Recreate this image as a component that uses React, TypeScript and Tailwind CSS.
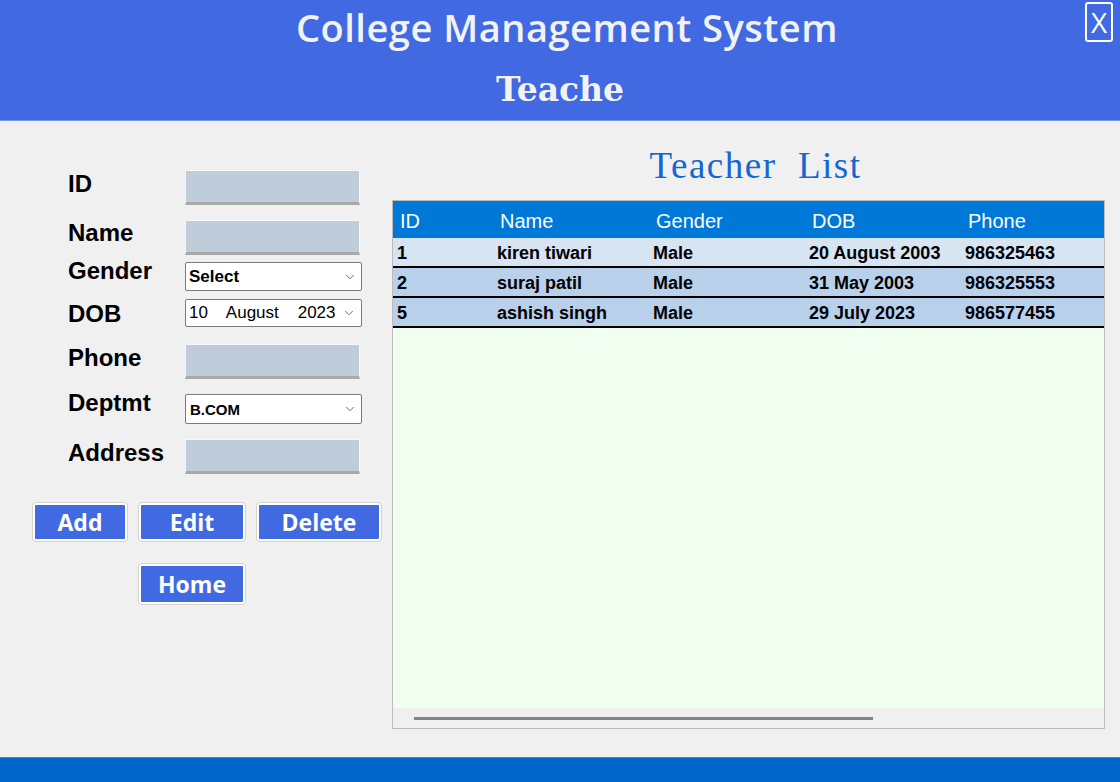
import { ChevronDown } from 'lucide-react'

const TEACHERS = [
  { id: '1', name: 'kiren tiwari', gender: 'Male', dob: '20 August 2003', phone: '986325463' },
  { id: '2', name: 'suraj patil', gender: 'Male', dob: '31 May 2003', phone: '986325553' },
  { id: '5', name: 'ashish singh', gender: 'Male', dob: '29 July 2023', phone: '986577455' },
]

const labelCls = "w-[117px] h-[28px] leading-[28px] text-[24px] font-bold text-black font-['Liberation_Sans',Arial,sans-serif]"
const inputCls = 'w-[175px] h-[35px] bg-[#bfcddb] border border-[#f7f7f7] border-b-[3px] border-b-[#a9a9a9] outline-none'
const selectCls = 'w-[177px] bg-white border border-[#7a7a7a] rounded-[2px] flex items-center pl-[3px] pr-[4px] text-black'
const btnCls = "h-[38px] bg-[#4169e1] border-2 border-white outline outline-1 outline-[#d4d4d4] rounded-[3px] text-white text-[23px] font-bold font-['Open_Sans',sans-serif] leading-none"

function TextField({ label, labelMt }: { label: string; labelMt: string }) {
  return (
    <div className="flex items-start">
      <div className={`${labelCls} ${labelMt}`}>{label}</div>
      <input className={inputCls} />
    </div>
  )
}

export default function App() {
  return (
    <div className="w-[1120px] h-[782px] flex flex-col bg-[#f0f0f0] overflow-hidden font-['Liberation_Sans',Arial,sans-serif]">
      <header className="relative h-[121px] bg-[#4169e1] border-b border-[#7493f0] flex flex-col items-center">
        <h1 className="mt-[2px] pl-[14px] text-[38px] leading-[50px] tracking-[0.5px] font-semibold text-[#f2f2f2] font-['Open_Sans',sans-serif]">
          College Management System
        </h1>
        <h2 className="mt-[18px] text-[33px] leading-[40px] font-bold text-[#f2f2f2] font-['DejaVu_Serif',serif]">
          Teache
        </h2>
        <button className="absolute right-[7px] top-[2px] w-[28px] h-[40px] border-2 border-white rounded-[3px] text-white text-[28px] leading-none font-['Open_Sans',sans-serif] flex items-center justify-center">
          X
        </button>
      </header>

      <main className="flex-1 flex">
        <div className="w-[392px] flex flex-col pt-[49px]">
          <div className="pl-[68px] flex flex-col">
            <TextField label="ID" labelMt="mt-[0px]" />
            <div className="mt-[15px]">
              <TextField label="Name" labelMt="-mt-[1px]" />
            </div>
            <div className="mt-[7px] flex items-start">
              <div className={`${labelCls} -mt-[5px]`}>Gender</div>
              <div className={`${selectCls} h-[29px]`}>
                <span className="flex-1 text-[17px] font-bold">Select</span>
                <ChevronDown size={14} strokeWidth={1.5} className="text-[#555]" />
              </div>
            </div>
            <div className="mt-[8px] flex items-start">
              <div className={`${labelCls} mt-[1px]`}>DOB</div>
              <div className={`${selectCls} h-[28px] overflow-hidden`}>
                <span className="w-[153px] text-[17px] whitespace-pre overflow-hidden">10    August    2023</span>
                <ChevronDown size={14} strokeWidth={1.5} className="text-[#555] shrink-0" />
              </div>
            </div>
            <div className="mt-[16px]">
              <TextField label="Phone" labelMt="mt-[0px]" />
            </div>
            <div className="mt-[15px] flex items-start">
              <div className={`${labelCls} -mt-[5px]`}>Deptmt</div>
              <div className={`${selectCls} h-[30px]`}>
                <span className="flex-1 text-[15px] font-bold pl-[1px] pt-[2px]">B.COM</span>
                <ChevronDown size={14} strokeWidth={1.5} className="text-[#555]" />
              </div>
            </div>
            <div className="mt-[15px]">
              <TextField label="Address" labelMt="mt-[0px]" />
            </div>
          </div>

          <div className="mt-[29px] pl-[33px] flex gap-[12px]">
            <button className={`${btnCls} w-[94px]`}>Add</button>
            <button className={`${btnCls} w-[106px]`}>Edit</button>
            <button className={`${btnCls} w-[124px]`}>Delete</button>
          </div>
          <div className="mt-[23px] pl-[139px]">
            <button className={`${btnCls} w-[106px] h-[40px]`}>Home</button>
          </div>
        </div>

        <div className="flex-1 flex flex-col pt-[23px] pb-[28px] pr-[15px]">
          <h3 className="h-[56px] pl-[14px] text-center text-[37px] leading-[44px] tracking-[1.5px] text-[#1466d4] whitespace-pre font-['Liberation_Serif','Times_New_Roman',serif]">
            Teacher  List
          </h3>
          <div className="flex-1 flex flex-col border border-[#bcbcbc]">
            <div className="h-[37px] pt-[3px] bg-[#0078d7] grid grid-cols-[100px_156px_156px_156px_1fr] items-center text-white text-[20px]">
              <div className="pl-[7px]">ID</div>
              <div className="pl-[7px]">Name</div>
              <div className="pl-[7px]">Gender</div>
              <div className="pl-[7px]">DOB</div>
              <div className="pl-[7px]">Phone</div>
            </div>
            {TEACHERS.map((t, i) => (
              <div
                key={t.id}
                className={`h-[30px] pt-[2px] border-b-2 border-black grid grid-cols-[100px_156px_156px_156px_1fr] items-center text-[18px] font-bold text-black ${i === 0 ? 'bg-[#d7e4f2]' : 'bg-[#b9d0ea]'}`}
              >
                <div className="pl-[4px]">{t.id}</div>
                <div className="pl-[4px]">{t.name}</div>
                <div className="pl-[4px]">{t.gender}</div>
                <div className="pl-[4px]">{t.dob}</div>
                <div className="pl-[4px]">{t.phone}</div>
              </div>
            ))}
            <div className="flex-1 bg-[#f0fff0]" />
            <div className="h-[20px] bg-[#f0f0f0] pt-[9px] pl-[21px]">
              <div className="w-[459px] h-[3px] bg-[#858585]" />
            </div>
          </div>
        </div>
      </main>

      <footer className="h-[25px] bg-[#0066cc] border-t border-[#3c88d8]" />
    </div>
  )
}
